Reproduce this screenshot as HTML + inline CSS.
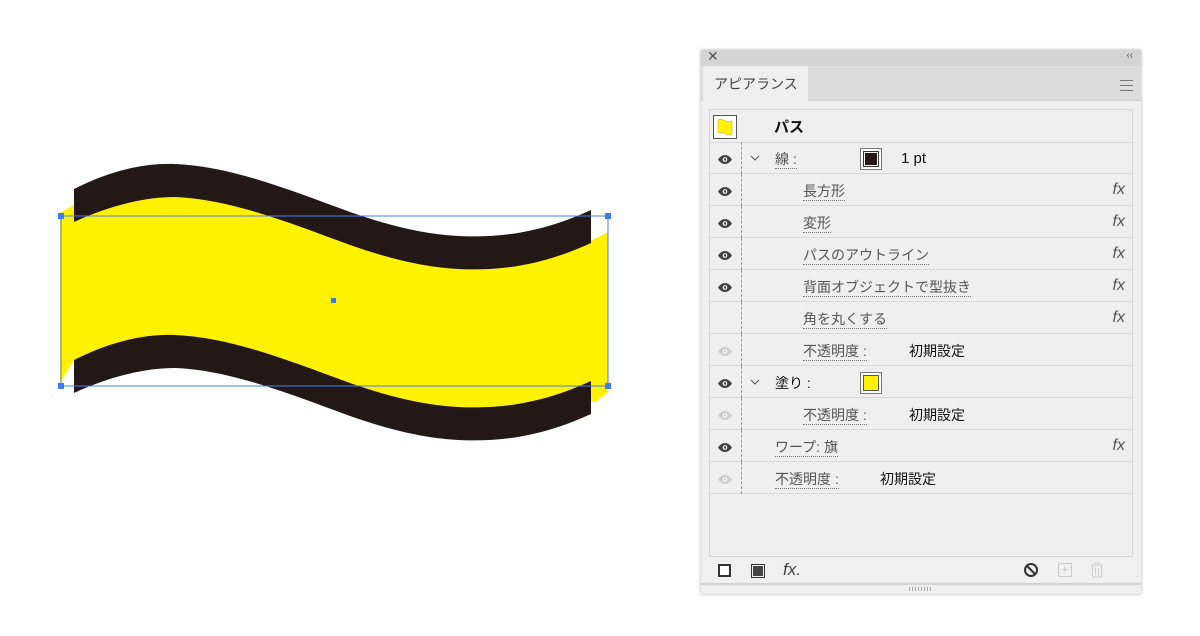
<!DOCTYPE html>
<html><head><meta charset="utf-8"><style>
body{margin:0;width:1200px;height:636px;background:#fff;position:relative;overflow:hidden;font-family:"Liberation Sans","Noto Sans CJK JP",sans-serif}
.panel{position:absolute;left:701px;top:50px;width:440px;height:544px;background:#f0f0f0;box-shadow:0 0 3px rgba(0,0,0,.35)}
.title{position:absolute;left:0;top:0;width:440px;height:16px;background:#d4d4d4}
.tabbar{position:absolute;left:0;top:16px;width:440px;height:34px;background:#dcdcdc;border-bottom:1px solid #cfcfcf}
.tab{position:absolute;left:2px;top:0;width:105px;height:35px;background:#efefef;font-size:14px;color:#444;line-height:36px;padding-left:11px;box-sizing:border-box}
.box{position:absolute;left:8px;top:59px;width:424px;height:448px;border:1px solid #d6d6d6;background:#efefef;box-sizing:border-box}
.row{position:absolute;left:0;width:422px;height:32px;border-bottom:1px solid #d8d8d8;box-sizing:border-box;font-size:14px}
.eye{position:absolute;left:7px;top:12px}
.div{position:absolute;left:31px;top:0;height:32px;border-left:1px dashed #999}
.lab{position:absolute;top:8px;color:#555;border-bottom:1px dotted #777;line-height:18px}
.val{position:absolute;top:8px;color:#111;line-height:18px}
.fx{position:absolute;right:7px;top:7px;font-style:italic;font-size:16px;color:#555}
.chev{position:absolute;left:40px;top:13px}
</style></head><body>
<svg style="position:absolute;left:0;top:0" width="640" height="460">
<path d="M60,213 L74,205 L74,222 C115,203 150,197 175,197 C230,199 290,223 350,245 C410,266 450,271 490,269 C530,267 565,255 608,232 L608,392 L596,402 L591,402 L591,381 C565,393 530,405 490,407 C450,409 410,404 350,383 C290,361 230,337 175,335 C150,334 115,339 74,360 L60,383 Z" fill="#fff200"/>
<g id="b"><path d="M74,189 C115,168 150,163 175,164 C230,166 290,190 350,212 C410,233 450,238 490,236 C530,234 565,222 591,210 L591,243 C565,255 530,267 490,269 C450,271 410,266 350,245 C290,223 230,199 175,197 C150,197 115,203 74,222 Z" fill="#231815"/></g>
<use href="#b" transform="translate(0,171)"/>
<rect x="61" y="216" width="547" height="170" fill="none" stroke="#4a7ef5" stroke-width="1"/>
<g fill="#3b7bf2"><rect x="58" y="213" width="6" height="6"/><rect x="605" y="213" width="6" height="6"/><rect x="58" y="383" width="6" height="6"/><rect x="605" y="383" width="6" height="6"/><rect x="331" y="298" width="5" height="5"/></g>
</svg>
<div class="panel">
<div class="title"><span style="position:absolute;left:6px;top:-2px;font-size:14px;color:#555">✕</span><span style="position:absolute;right:8px;top:0;font-size:10px;color:#555">‹‹</span></div>
<div class="tabbar"><div class="tab">アピアランス</div><div style="position:absolute;right:8px;top:14px;width:13px;height:9px;border-top:1px solid #777;border-bottom:1px solid #777"><div style="margin-top:4px;border-top:1px solid #777"></div></div></div>
<div class="box">
<div class="row" style="top:0;height:33px"><div style="position:absolute;left:3px;top:5px;width:22px;height:22px;border:1px solid #555;background:#fff"><svg width="22" height="22"><path d="M4,4 C9,1 12,8 18,5 L18,18 C12,21 9,14 4,17Z" fill="#fff200" stroke="#bba800" stroke-width=".5"/></svg></div><span class="val" style="left:64px;top:9px;font-weight:bold;font-size:15px">パス</span></div>
</div>
</div>
<div style="position:absolute;left:710px;top:142px;width:422px">
<div class="row" style="top:0"><svg class="eye" width="16" height="11"><path d="M1,5.5 C5,-0.5 11,-0.5 15,5.5 C11,11.5 5,11.5 1,5.5Z" fill="#444"/><circle cx="8" cy="5.5" r="2.3" fill="#fff"/><circle cx="8" cy="5.5" r="1.2" fill="#444"/></svg><div class="div"></div><svg class="chev" width="10" height="6"><path d="M1,1 L5,5 L9,1" fill="none" stroke="#555"/></svg><span class="lab" style="left:65px">線 :</span><div style="position:absolute;left:150px;top:6px;width:20px;height:20px;border:1px solid #777;background:#fff"><div style="margin:2px;width:14px;height:14px;border:1px solid #333;background:#fff"><div style="margin:1px;width:12px;height:12px;background:#231815"></div></div></div><span class="val" style="left:191px;font-size:15px">1 pt</span></div>
<div class="row" style="top:32px"><svg class="eye" width="16" height="11"><path d="M1,5.5 C5,-0.5 11,-0.5 15,5.5 C11,11.5 5,11.5 1,5.5Z" fill="#444"/><circle cx="8" cy="5.5" r="2.3" fill="#fff"/><circle cx="8" cy="5.5" r="1.2" fill="#444"/></svg><div class="div"></div><span class="lab" style="left:93px">長方形</span><span class="fx">fx</span></div>
<div class="row" style="top:64px"><svg class="eye" width="16" height="11"><path d="M1,5.5 C5,-0.5 11,-0.5 15,5.5 C11,11.5 5,11.5 1,5.5Z" fill="#444"/><circle cx="8" cy="5.5" r="2.3" fill="#fff"/><circle cx="8" cy="5.5" r="1.2" fill="#444"/></svg><div class="div"></div><span class="lab" style="left:93px">変形</span><span class="fx">fx</span></div>
<div class="row" style="top:96px"><svg class="eye" width="16" height="11"><path d="M1,5.5 C5,-0.5 11,-0.5 15,5.5 C11,11.5 5,11.5 1,5.5Z" fill="#444"/><circle cx="8" cy="5.5" r="2.3" fill="#fff"/><circle cx="8" cy="5.5" r="1.2" fill="#444"/></svg><div class="div"></div><span class="lab" style="left:93px">パスのアウトライン</span><span class="fx">fx</span></div>
<div class="row" style="top:128px"><svg class="eye" width="16" height="11"><path d="M1,5.5 C5,-0.5 11,-0.5 15,5.5 C11,11.5 5,11.5 1,5.5Z" fill="#444"/><circle cx="8" cy="5.5" r="2.3" fill="#fff"/><circle cx="8" cy="5.5" r="1.2" fill="#444"/></svg><div class="div"></div><span class="lab" style="left:93px">背面オブジェクトで型抜き</span><span class="fx">fx</span></div>
<div class="row" style="top:160px"><div class="div"></div><span class="lab" style="left:93px">角を丸くする</span><span class="fx">fx</span></div>
<div class="row" style="top:192px"><svg class="eye" width="16" height="11"><path d="M1,5.5 C5,-0.5 11,-0.5 15,5.5 C11,11.5 5,11.5 1,5.5Z" fill="#ccc"/><circle cx="8" cy="5.5" r="2.3" fill="#fff"/><circle cx="8" cy="5.5" r="1.2" fill="#ccc"/></svg><div class="div"></div><span class="lab" style="left:93px">不透明度 :</span><span class="val" style="left:199px">初期設定</span></div>
<div class="row" style="top:224px"><svg class="eye" width="16" height="11"><path d="M1,5.5 C5,-0.5 11,-0.5 15,5.5 C11,11.5 5,11.5 1,5.5Z" fill="#444"/><circle cx="8" cy="5.5" r="2.3" fill="#fff"/><circle cx="8" cy="5.5" r="1.2" fill="#444"/></svg><div class="div"></div><svg class="chev" width="10" height="6"><path d="M1,1 L5,5 L9,1" fill="none" stroke="#555"/></svg><span class="val" style="left:65px">塗り :</span><div style="position:absolute;left:150px;top:6px;width:20px;height:20px;border:1px solid #777;background:#fff"><div style="margin:2px;width:14px;height:14px;border:1px solid #555;background:#fff200"></div></div></div>
<div class="row" style="top:256px"><svg class="eye" width="16" height="11"><path d="M1,5.5 C5,-0.5 11,-0.5 15,5.5 C11,11.5 5,11.5 1,5.5Z" fill="#ccc"/><circle cx="8" cy="5.5" r="2.3" fill="#fff"/><circle cx="8" cy="5.5" r="1.2" fill="#ccc"/></svg><div class="div"></div><span class="lab" style="left:93px">不透明度 :</span><span class="val" style="left:199px">初期設定</span></div>
<div class="row" style="top:288px"><svg class="eye" width="16" height="11"><path d="M1,5.5 C5,-0.5 11,-0.5 15,5.5 C11,11.5 5,11.5 1,5.5Z" fill="#444"/><circle cx="8" cy="5.5" r="2.3" fill="#fff"/><circle cx="8" cy="5.5" r="1.2" fill="#444"/></svg><div class="div"></div><span class="lab" style="left:65px">ワープ: 旗</span><span class="fx">fx</span></div>
<div class="row" style="top:320px"><svg class="eye" width="16" height="11"><path d="M1,5.5 C5,-0.5 11,-0.5 15,5.5 C11,11.5 5,11.5 1,5.5Z" fill="#ccc"/><circle cx="8" cy="5.5" r="2.3" fill="#fff"/><circle cx="8" cy="5.5" r="1.2" fill="#ccc"/></svg><div class="div"></div><span class="lab" style="left:65px">不透明度 :</span><span class="val" style="left:170px">初期設定</span></div>
</div>
<div style="position:absolute;left:718px;top:564px;width:13px;height:13px;border:2px solid #333;box-sizing:border-box;background:#fff"></div>
<div style="position:absolute;left:751px;top:564px;width:14px;height:14px;border:1px solid #333;box-sizing:border-box;padding:1px"><div style="width:10px;height:10px;background:#444"></div></div>
<span style="position:absolute;left:783px;top:560px;font-style:italic;font-size:17px;color:#444">fx.</span>
<svg style="position:absolute;left:1023px;top:562px" width="16" height="16"><circle cx="8" cy="8" r="6" fill="none" stroke="#333" stroke-width="2"/><line x1="4" y1="4" x2="12" y2="12" stroke="#333" stroke-width="2"/></svg>
<div style="position:absolute;left:1058px;top:563px;width:14px;height:14px;border:1px solid #ccc;box-sizing:border-box;color:#bbb;font-size:11px;line-height:12px;text-align:center">+</div>
<svg style="position:absolute;left:1090px;top:562px" width="14" height="16"><path d="M1,3 H13 M5,3 V1 H9 V3 M2.5,3 V15 H11.5 V3 M5.5,6 V13 M8.5,6 V13" fill="none" stroke="#ccc"/></svg>
<div style="position:absolute;left:701px;top:583px;width:440px;border-top:2px solid #d0d0d0"></div>
<div style="position:absolute;left:909px;top:587px;width:24px;height:4px;background:repeating-linear-gradient(90deg,#aaa 0 1px,transparent 1px 3px)"></div>
</body></html>
